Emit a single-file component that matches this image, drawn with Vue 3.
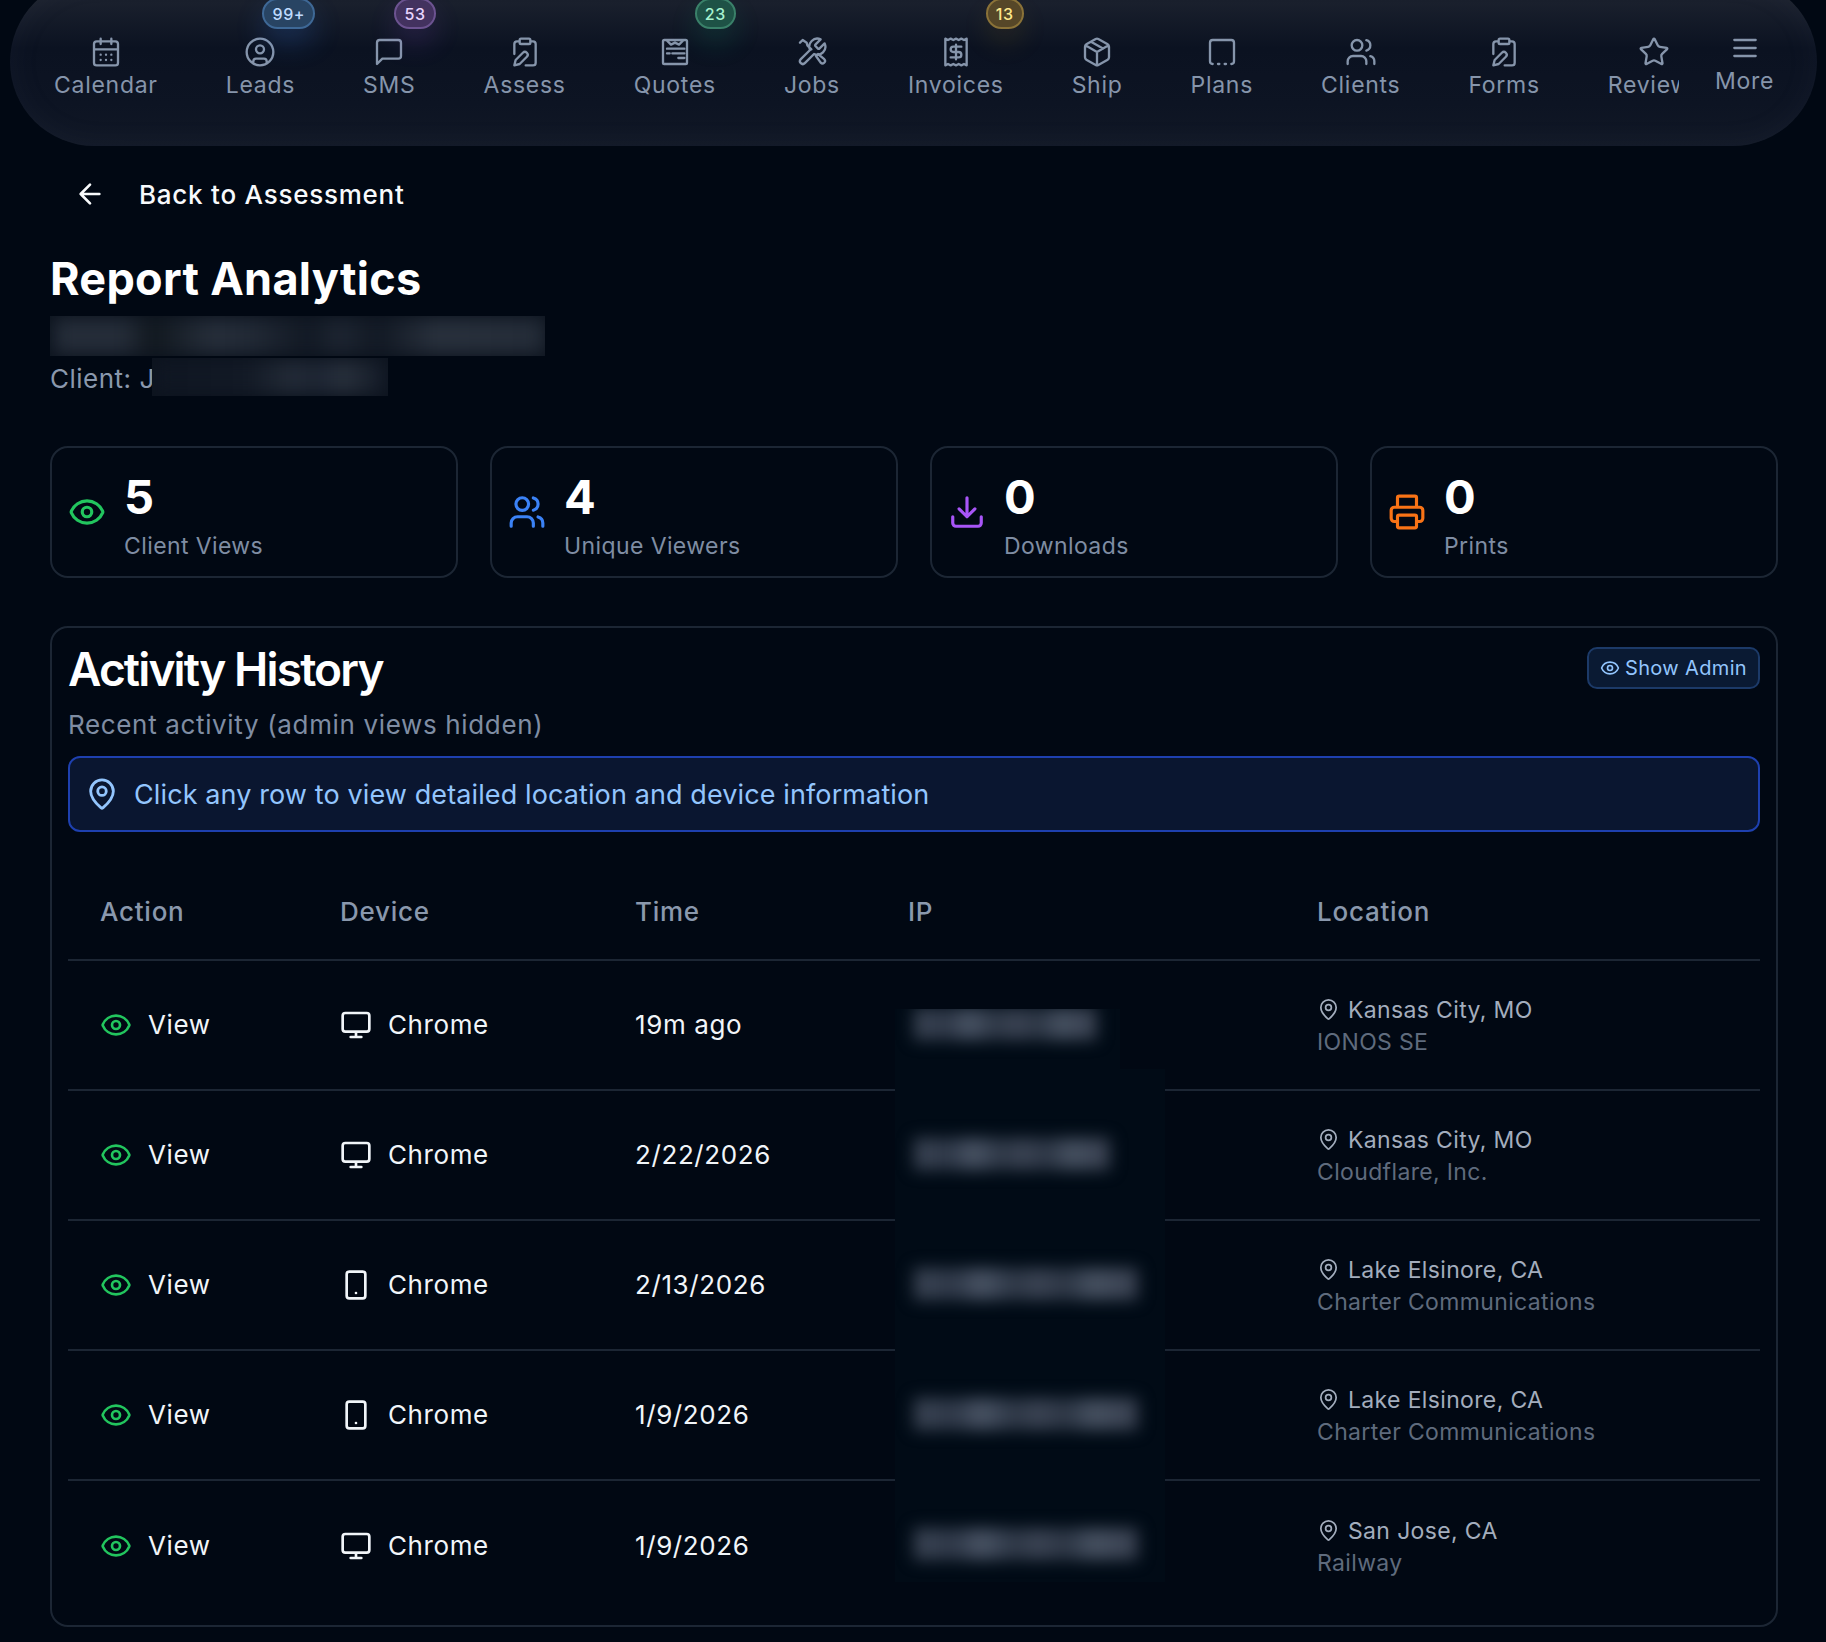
<script setup>
const circle = (cx, cy, r) => `M${cx - r} ${cy}a${r} ${r} 0 1 0 ${2 * r} 0a${r} ${r} 0 1 0 ${-2 * r} 0`
const rect = (x, y, w, h, r) =>
  `M${x + r} ${y}h${w - 2 * r}a${r} ${r} 0 0 1 ${r} ${r}v${h - 2 * r}a${r} ${r} 0 0 1 ${-r} ${r}h${-(w - 2 * r)}a${r} ${r} 0 0 1 ${-r} ${-r}v${-(h - 2 * r)}a${r} ${r} 0 0 1 ${r} ${-r}z`

const clipboardPen = `${rect(8, 2, 8, 4, 1)}M10.4 12.6a2 2 0 0 1 3 3L8 21l-4 1 1-4ZM16 4h2a2 2 0 0 1 2 2v14a2 2 0 0 1-2 2h-5.5M4 13.5V6a2 2 0 0 1 2-2h2`
const icons = {
  calendar: `M8 2v4M16 2v4${rect(3, 4, 18, 18, 2)}M3 10h18M8 14h.01M12 14h.01M16 14h.01M8 18h.01M12 18h.01M16 18h.01`,
  user: `${circle(12, 12, 10)}${circle(12, 10, 3)}M7 20.662V19a2 2 0 0 1 2-2h6a2 2 0 0 1 2 2v1.662`,
  message: 'M21 15a2 2 0 0 1-2 2H7l-4 4V5a2 2 0 0 1 2-2h14a2 2 0 0 1 2 2z',
  clipboardPen,
  quote: `${rect(3, 3, 18, 18, 1)}M5.5 3 9 6.5l3-1.5 3 1.5L18.5 3M6 9.5h13M6 13h2M10 13h9M14.5 16.5h4.5`,
  tools:
    'M14.7 6.3a1 1 0 0 0 0 1.4l1.6 1.6a1 1 0 0 0 1.4 0l3.77-3.77a6 6 0 0 1-7.94 7.94l-6.91 6.91a2.12 2.12 0 0 1-3-3l6.91-6.91a6 6 0 0 1 7.94-7.94l-3.76 3.76zM3 5l2-2 3 2 .5 2 3 3M15 15l3.5 5a1.8 1.8 0 0 0 2.7-2.6L16.5 13.5',
  receipt:
    'M4 2v20l2-1 2 1 2-1 2 1 2-1 2 1 2-1 2 1V2l-2 1-2-1-2 1-2-1-2 1-2-1-2 1ZM16 8h-6a2 2 0 1 0 0 4h4a2 2 0 1 1 0 4H8M12 17.5v-11',
  box: 'M11 21.73a2 2 0 0 0 2 0l7-4A2 2 0 0 0 21 16V8a2 2 0 0 0-1-1.73l-7-4a2 2 0 0 0-2 0l-7 4A2 2 0 0 0 3 8v8a2 2 0 0 0 1 1.73zM12 22V12M3.3 7l8.7 5 8.7-5M7.5 4.27l9 5.15',
  dashed: 'M5 21a2 2 0 0 1-2-2V5a2 2 0 0 1 2-2h14a2 2 0 0 1 2 2v14a2 2 0 0 1-2 2M9 21h1M14 21h1',
  users: `M16 21v-2a4 4 0 0 0-4-4H6a4 4 0 0 0-4 4v2${circle(9, 7, 4)}M22 21v-2a4 4 0 0 0-3-3.87M16 3.13a4 4 0 0 1 0 7.75`,
  star: 'M11.525 2.295a.53.53 0 0 1 .95 0l2.31 4.679a2.123 2.123 0 0 0 1.595 1.16l5.166.756a.53.53 0 0 1 .294.904l-3.736 3.638a2.123 2.123 0 0 0-.611 1.878l.882 5.14a.53.53 0 0 1-.771.56l-4.618-2.428a2.122 2.122 0 0 0-1.973 0L6.396 21.01a.53.53 0 0 1-.77-.56l.881-5.139a2.122 2.122 0 0 0-.611-1.879L2.16 9.795a.53.53 0 0 1 .294-.906l5.165-.755a2.122 2.122 0 0 0 1.597-1.16z',
  menu: 'M4 6h16M4 12h16M4 18h16',
  arrow: 'M19 12H5M12 19l-7-7 7-7',
  eye: `M2.062 12.348a1 1 0 0 1 0-.696 10.75 10.75 0 0 1 19.876 0 1 1 0 0 1 0 .696 10.75 10.75 0 0 1-19.876 0${circle(12, 12, 3)}`,
  download: 'M12 15V3M21 15v4a2 2 0 0 1-2 2H5a2 2 0 0 1-2-2v-4M7 10l5 5 5-5',
  printer: `M6 18H4a2 2 0 0 1-2-2v-5a2 2 0 0 1 2-2h16a2 2 0 0 1 2 2v5a2 2 0 0 1-2 2h-2M6 9V3a1 1 0 0 1 1-1h10a1 1 0 0 1 1 1v6${rect(6, 14, 12, 8, 1)}`,
  pin: `M20 10c0 4.993-5.539 10.193-7.399 11.799a1 1 0 0 1-1.202 0C9.539 20.193 4 14.993 4 10a8 8 0 0 1 16 0${circle(12, 10, 3)}`,
  monitor: `${rect(2, 3, 20, 14, 2)}M8 21h8M12 17v4`,
  tablet: `${rect(5, 2, 14, 20, 2)}M12 18h.01`
}

const navItems = [
  { label: 'Calendar', icon: 'calendar' },
  { label: 'Leads', icon: 'user', badge: '99+', tone: 'blue' },
  { label: 'SMS', icon: 'message', badge: '53', tone: 'purple' },
  { label: 'Assess', icon: 'clipboardPen' },
  { label: 'Quotes', icon: 'quote', badge: '23', tone: 'green' },
  { label: 'Jobs', icon: 'tools' },
  { label: 'Invoices', icon: 'receipt', badge: '13', tone: 'amber' },
  { label: 'Ship', icon: 'box' },
  { label: 'Plans', icon: 'dashed' },
  { label: 'Clients', icon: 'users' },
  { label: 'Forms', icon: 'clipboardPen' },
  { label: 'Review', icon: 'star', wide: true }
]

const stats = [
  { value: '5', label: 'Client Views', icon: 'eye', tone: 'green' },
  { value: '4', label: 'Unique Viewers', icon: 'users', tone: 'blue' },
  { value: '0', label: 'Downloads', icon: 'download', tone: 'purple' },
  { value: '0', label: 'Prints', icon: 'printer', tone: 'orange' }
]

const rows = [
  { device: 'monitor', time: '19m ago', city: 'Kansas City, MO', org: 'IONOS SE', ip: 183 },
  { device: 'monitor', time: '2/22/2026', city: 'Kansas City, MO', org: 'Cloudflare, Inc.', ip: 196 },
  { device: 'tablet', time: '2/13/2026', city: 'Lake Elsinore, CA', org: 'Charter Communications', ip: 224 },
  { device: 'tablet', time: '1/9/2026', city: 'Lake Elsinore, CA', org: 'Charter Communications', ip: 224 },
  { device: 'monitor', time: '1/9/2026', city: 'San Jose, CA', org: 'Railway', ip: 224 }
]
</script>

<template>
  <div class="page">
    <nav class="nav">
      <div class="nav-scroll">
        <a v-for="item in navItems" :key="item.label" class="nav-item" :class="{ 'nav-wide': item.wide }">
          <svg class="ico nav-ico" viewBox="0 0 24 24"><path :d="icons[item.icon]" /></svg>
          <span class="nav-label">{{ item.label }}</span>
          <span v-if="item.badge" class="badge" :class="item.tone">{{ item.badge }}</span>
        </a>
      </div>
      <a class="nav-more">
        <svg class="ico nav-ico" viewBox="0 0 24 24"><path :d="icons.menu" /></svg>
        <span class="nav-label">More</span>
      </a>
    </nav>

    <main class="main">
      <a class="back">
        <svg class="ico back-ico" viewBox="0 0 24 24"><path :d="icons.arrow" /></svg>
        <span>Back to Assessment</span>
      </a>

      <h1 class="title">Report Analytics</h1>
      <div class="redact redact-name"><i></i></div>
      <div class="client">
        <span>Client: J</span>
        <div class="redact redact-client"><i></i></div>
      </div>

      <section class="stats">
        <div v-for="s in stats" :key="s.label" class="stat">
          <svg class="ico stat-ico" :class="s.tone" viewBox="0 0 24 24"><path :d="icons[s.icon]" /></svg>
          <div>
            <div class="stat-value">{{ s.value }}</div>
            <div class="stat-label">{{ s.label }}</div>
          </div>
        </div>
      </section>

      <section class="card">
        <header class="card-head">
          <h2 class="card-title">Activity History</h2>
          <button class="admin-btn">
            <svg class="ico admin-ico" viewBox="0 0 24 24"><path :d="icons.eye" /></svg>
            Show Admin
          </button>
        </header>
        <p class="card-sub">Recent activity (admin views hidden)</p>
        <div class="info">
          <svg class="ico info-ico" viewBox="0 0 24 24"><path :d="icons.pin" /></svg>
          <span>Click any row to view detailed location and device information</span>
        </div>

        <div class="table">
          <div class="tr th">
            <div>Action</div>
            <div>Device</div>
            <div>Time</div>
            <div>IP</div>
            <div>Location</div>
          </div>
          <div v-for="(r, i) in rows" :key="i" class="tr td" :class="{ last: i === rows.length - 1 }">
            <div class="cell">
              <svg class="ico row-ico green" viewBox="0 0 24 24"><path :d="icons.eye" /></svg>
              <span>View</span>
            </div>
            <div class="cell">
              <svg class="ico row-ico" viewBox="0 0 24 24"><path :d="icons[r.device]" /></svg>
              <span>Chrome</span>
            </div>
            <div class="cell">{{ r.time }}</div>
            <div></div>
            <div class="loc">
              <div class="city">
                <svg class="ico pin-ico" viewBox="0 0 24 24"><path :d="icons.pin" /></svg>
                <span>{{ r.city }}</span>
              </div>
              <div class="org">{{ r.org }}</div>
            </div>
          </div>

          <div class="ip-mask">
            <div v-for="(r, i) in rows" :key="i" class="ip-line">
              <i :style="{ width: r.ip + 'px' }"></i>
            </div>
          </div>
        </div>
      </section>
    </main>
  </div>
</template>

<style>
html,
body {
  margin: 0;
  background: #010813;
}
</style>

<style scoped>
.page {
  width: 1826px;
  height: 1642px;
  overflow: hidden;
  background: #010813;
  font-family: Inter, 'Liberation Sans', sans-serif;
  color: #fff;
}

.ico {
  display: block;
  flex: none;
  fill: none;
  stroke: currentColor;
  stroke-width: 2;
  stroke-linecap: round;
  stroke-linejoin: round;
}

.green { color: #22c55e; }
.blue { color: #3b82f6; }
.purple { color: #a855f7; }
.orange { color: #f97316; }

/* nav */
.nav {
  margin: -22px 9px 0 10px;
  height: 168px;
  border-radius: 84px;
  background: linear-gradient(180deg, #1d2230 0%, #1a202d 14%, #0b1221 42%, #0d1423 75%, #111826 100%);
  box-shadow: inset 0 0 34px rgba(148, 163, 184, 0.05);
  display: flex;
  padding-left: 44px;
  color: #8695ab;
}

.nav-scroll {
  width: 1625px;
  overflow: hidden;
  display: flex;
  gap: 68px;
  padding-top: 58px;
}

.nav-item {
  position: relative;
  display: flex;
  flex: none;
  flex-direction: column;
  align-items: center;
  align-self: flex-start;
}

.nav-wide {
  width: 93px;
}

.nav-wide .nav-label {
  align-self: flex-start;
}

.nav-ico {
  width: 32px;
  height: 32px;
  stroke-width: 1.75;
}

.nav-label {
  font-size: 23px;
  line-height: 30px;
  letter-spacing: 0.72px;
  margin-top: 2px;
}

.nav-more {
  margin-left: 36px;
  padding-top: 54px;
  display: flex;
  flex-direction: column;
  align-items: center;
  align-self: flex-start;
}

.badge {
  position: absolute;
  top: -38px;
  right: -20px;
  height: 31px;
  min-width: 38px;
  box-sizing: border-box;
  padding: 0 8px;
  border-radius: 16px;
  border: 2px solid;
  display: flex;
  align-items: center;
  justify-content: center;
  font-size: 16px;
  letter-spacing: 0.6px;
  font-weight: 500;
}
.badge.blue {
  background: #284463;
  border-color: #3e6896;
  color: #bfdbfe;
  box-shadow: 0 14px 28px rgba(59, 130, 246, 0.22);
}
.badge.purple {
  background: #43325f;
  border-color: #6c5390;
  color: #e9d5ff;
  box-shadow: 0 14px 28px rgba(168, 85, 247, 0.16);
}
.badge.green {
  background: #1e5246;
  border-color: #3a8069;
  color: #a7f3d0;
  box-shadow: 0 14px 28px rgba(16, 185, 129, 0.16);
}
.badge.amber {
  background: #564728;
  border-color: #8a7238;
  color: #fde68a;
  box-shadow: 0 14px 28px rgba(234, 179, 8, 0.1);
}

/* main */
.main {
  padding: 0 48px 0 50px;
}

.back {
  margin: 28px 0 0 24px;
  height: 40px;
  display: flex;
  align-items: center;
  gap: 33px;
  font-size: 26px;
  font-weight: 500;
  letter-spacing: 0.75px;
  color: #f8fafc;
}

.back-ico {
  width: 32px;
  height: 32px;
}

.title {
  margin: 37px 0 0;
  font-size: 45px;
  line-height: 56px;
  font-weight: 700;
  letter-spacing: 0.3px;
}

.redact {
  overflow: hidden;
  background: #0c131e;
}

.redact i {
  display: block;
  filter: blur(9px);
}

.redact-name {
  margin-top: 9px;
  width: 495px;
  height: 40px;
}
.redact-name i {
  margin: 2px 0 0 4px;
  height: 36px;
  background: linear-gradient(90deg, #252d39 0 14%, #11181f 20%, #262e3a 32%, #222a36 40%, #121924 52%, #1e2632 58%, #121924 66%, #29313d 78%, #242c38 100%);
}

.client {
  margin-top: 3px;
  height: 38px;
  display: flex;
  align-items: center;
  font-size: 26px;
  letter-spacing: 0.5px;
  color: #8a98ad;
  position: relative;
}

.redact-client {
  position: absolute;
  left: 102px;
  top: -1px;
  width: 236px;
  height: 38px;
}
.redact-client i {
  margin: 2px 0 0;
  height: 34px;
  background: linear-gradient(90deg, #0f1622 0, #131a26 40%, #242c38 60%, #1c2432 68%, #28303c 82%, #111824 100%);
}

.stats {
  margin-top: 49px;
  display: grid;
  grid-template-columns: repeat(4, 408px);
  gap: 32px;
}

.stat {
  height: 132px;
  box-sizing: border-box;
  border: 2px solid #1c2634;
  border-radius: 18px;
  padding: 7px 16px 0;
  display: flex;
  align-items: center;
  gap: 18px;
}

.stat-ico {
  width: 38px;
  height: 38px;
  margin-top: -7px;
}

.stat-value {
  font-size: 47px;
  line-height: 54px;
  font-weight: 700;
}

.stat-label {
  font-size: 23px;
  line-height: 32px;
  margin-top: 6px;
  letter-spacing: 0.4px;
  color: #7f8da3;
}

/* card */
.card {
  margin-top: 48px;
  height: 1001px;
  box-sizing: border-box;
  border: 2px solid #1c2634;
  border-radius: 18px;
  padding: 16px;
}

.card-head {
  display: flex;
  justify-content: space-between;
  align-items: flex-start;
}

.card-title {
  margin: -1px 0 1px;
  font-size: 46px;
  line-height: 52px;
  font-weight: 600;
  letter-spacing: -1.85px;
}

.admin-btn {
  margin-top: 3px;
  height: 42px;
  width: 173px;
  box-sizing: border-box;
  border: 2px solid #1c3a68;
  border-radius: 10px;
  background: #0a1a33;
  color: #93c5fd;
  font-family: inherit;
  font-size: 20px;
  letter-spacing: 0.35px;
  display: flex;
  align-items: center;
  justify-content: center;
  gap: 5px;
  padding: 0;
}

.admin-ico {
  width: 20px;
  height: 20px;
}

.card-sub {
  margin: 12px 0 0;
  font-size: 26px;
  line-height: 34px;
  letter-spacing: 0.65px;
  color: #7f8da3;
}

.info {
  margin-top: 14px;
  height: 76px;
  box-sizing: border-box;
  border: 2px solid #1e40af;
  border-radius: 12px;
  background: #0a1630;
  color: #93c5fd;
  display: flex;
  align-items: center;
  gap: 15px;
  padding-left: 15px;
  font-size: 27px;
  letter-spacing: 0.11px;
}

.info-ico {
  width: 34px;
  height: 34px;
}

.table {
  position: relative;
  margin-top: 32px;
}

.tr {
  display: grid;
  grid-template-columns: 240px 295px 273px 409px 475px;
  align-items: center;
  box-sizing: border-box;
  border-bottom: 2px solid #1c2634;
}

.tr > div {
  padding-left: 32px;
}

.th {
  height: 97px;
  font-size: 26px;
  font-weight: 500;
  letter-spacing: 0.75px;
  color: #8a98ad;
}

.td {
  height: 130px;
  padding-bottom: 1px;
  font-size: 26px;
  letter-spacing: 0.6px;
  color: #f1f5f9;
}

.td.last {
  border-bottom: none;
}

.cell {
  display: flex;
  align-items: center;
  gap: 16px;
}

.row-ico {
  width: 32px;
  height: 32px;
}

.loc {
  padding-top: 2px;
}

.city {
  display: flex;
  align-items: center;
  gap: 8px;
  font-size: 23px;
  line-height: 32px;
  color: #a3adbd;
  letter-spacing: 0.35px;
}

.pin-ico {
  width: 23px;
  height: 23px;
  stroke-width: 1.8;
}

.org {
  font-size: 23px;
  line-height: 32px;
  color: #5f6b7d;
  letter-spacing: 0.35px;
}

.ip-mask {
  position: absolute;
  left: 827px;
  top: 145px;
  width: 270px;
  height: 573px;
  overflow: hidden;
  background: #010b16;
  clip-path: polygon(0 0, 225px 0, 225px 60px, 100% 60px, 100% 100%, 0 100%);
}

.ip-line {
  height: 130px;
  padding: 1px 0 0 19px;
  box-sizing: border-box;
}

.ip-line i {
  display: block;
  margin-top: -2px;
  height: 32px;
  background: linear-gradient(90deg, #3a4454 0, #2e3848 18%, #485364 30%, #2d3746 45%, #3a4353 55%, #2c3645 68%, #455060 80%, #373f4f 100%);
  filter: blur(8px);
}
</style>
